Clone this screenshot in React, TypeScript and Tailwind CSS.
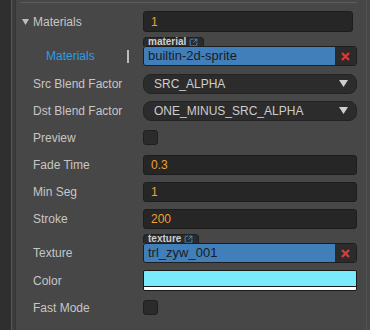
import React from "react";
import { SquareArrowOutUpRight } from "lucide-react";

const font = { fontFamily: '"Liberation Sans", Arial, sans-serif' };

const Label = ({ children }: { children: React.ReactNode }) => (
  <div className="w-[110px] shrink-0 text-[12px] text-[#c6c6c6]">{children}</div>
);

const NumberInput = ({ value, extra = "" }: { value: string; extra?: string }) => (
  <div
    className={`flex-1 h-[20px] flex items-center pl-[7px] rounded-[3px] bg-[#262626] border border-[#1d1d1d] text-[12px] text-[#f0a030] ${extra}`}
  >
    {value}
  </div>
);

const Select = ({ value }: { value: string }) => (
  <div className="flex-1 h-[20px] flex items-center justify-between pl-[10px] pr-[8px] rounded-[8px] bg-[#2c2c2c] border border-[#232323] text-[12px] text-[#cdcdcd]">
    <span>{value}</span>
    <svg width="9" height="7" viewBox="0 0 9 7">
      <polygon points="0,0 9,0 4.5,7" fill="#cfcfcf" />
    </svg>
  </div>
);

const Checkbox = () => (
  <div className="w-[15px] h-[15px] rounded-[3px] bg-[#2b2b2b] border border-[#1f1f1f]" />
);

const AssetField = ({ tag, value }: { tag: string; value: string }) => (
  <div className="flex-1 flex flex-col">
    <div className="self-start h-[9px] flex items-center gap-[3px] pl-[4px] pr-[5px] rounded-t-[4px] bg-[#2b2b2b] border border-b-0 border-[#1f1f1f]">
      <span className="text-[10px] leading-none font-bold text-[#cfcfcf] -mt-[1px]">{tag}</span>
      <SquareArrowOutUpRight size={9} strokeWidth={2.5} color="#3d8fd6" />
    </div>
    <div className="h-[20px] flex rounded-[3px] border border-[#1e1e1e] overflow-hidden">
      <div className="flex-1 flex items-center pl-[4px] bg-[#417fba] text-[13px] text-[#1c1c1c]">{value}</div>
      <div className="w-[21px] flex items-center justify-center bg-[#2b2b2b]">
        <svg width="9" height="9" viewBox="0 0 9 9">
          <path d="M1 1 L8 8 M8 1 L1 8" stroke="#d63b3b" strokeWidth="2.4" />
        </svg>
      </div>
    </div>
  </div>
);

const Row = ({ children }: { children: React.ReactNode }) => (
  <div className="h-[27px] flex items-center pl-[17px] pr-[9px]">{children}</div>
);

export default function App() {
  return (
    <div className="w-[370px] h-[330px] flex bg-[#474747] overflow-hidden" style={font}>
      <div className="w-[11px] bg-[#2f2f2f]" />
      <div className="w-px bg-[#575757]" />
      <div className="w-[3px] bg-[#3d3d3d]" />
      <div className="w-px bg-[#353535]" />
      <div className="flex-1 flex flex-col">
        <div className="mt-[2px] ml-[4px] mr-[9px] h-px bg-[#5c5c5c]" />
        <div className="mt-[5px]" />
        <div className="h-[27px] flex items-center pl-[6px] pr-[9px]">
          <svg width="7" height="6" viewBox="0 0 7 6" className="mr-[4px]">
            <polygon points="0,0 7,0 3.5,6" fill="#bdbdbd" />
          </svg>
          <Label>Materials</Label>
          <NumberInput value="1" extra="mr-[4px] h-[21px]" />
        </div>
        <div className="h-[35px] flex pl-[17px] pr-[9px] pt-[2px]">
          <div className="w-[110px] shrink-0 pt-[9px] h-[29px] flex items-center">
            <span className="pl-[13px] w-[94px] text-[12px] text-[#2f9be6]">Materials</span>
            <div className="w-[2px] h-[13px] bg-[#bcbcbc]" />
          </div>
          <AssetField tag="material" value="builtin-2d-sprite" />
        </div>
        <Row>
          <Label>Src Blend Factor</Label>
          <Select value="SRC_ALPHA" />
        </Row>
        <Row>
          <Label>Dst Blend Factor</Label>
          <Select value="ONE_MINUS_SRC_ALPHA" />
        </Row>
        <Row>
          <Label>Preview</Label>
          <Checkbox />
        </Row>
        <Row>
          <Label>Fade Time</Label>
          <NumberInput value="0.3" />
        </Row>
        <Row>
          <Label>Min Seg</Label>
          <NumberInput value="1" />
        </Row>
        <Row>
          <Label>Stroke</Label>
          <NumberInput value="200" />
        </Row>
        <div className="h-[35px] flex pl-[17px] pr-[9px] pt-[2px]">
          <div className="w-[110px] shrink-0 pt-[9px] h-[29px] flex items-center text-[12px] text-[#c6c6c6]">
            Texture
          </div>
          <AssetField tag="texture" value="trl_zyw_001" />
        </div>
        <Row>
          <Label>Color</Label>
          <div className="flex-1 h-[21px] flex flex-col border border-[#1a1a1a] rounded-[2px] overflow-hidden">
            <div className="flex-1 bg-[#7aeaff]" />
            <div className="h-[4px] bg-white border-t border-[#1a1a1a]" />
          </div>
        </Row>
        <Row>
          <Label>Fast Mode</Label>
          <Checkbox />
        </Row>
      </div>
      <div className="w-px bg-[#535353]" />
      <div className="w-[3px] bg-[#474747]" />
    </div>
  );
}
